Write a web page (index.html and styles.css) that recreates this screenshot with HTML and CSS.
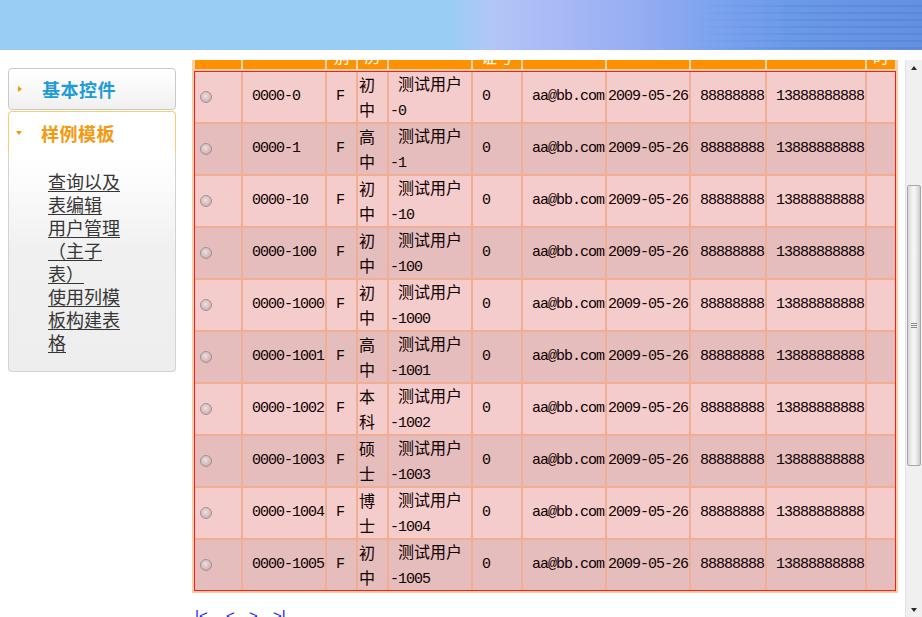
FILE: index.html
```html
<!DOCTYPE html>
<html lang="zh-CN">
<head>
<meta charset="utf-8">
<title>样例模板</title>
<link rel="stylesheet" href="styles.css">
</head>
<body>
<div class="banner"></div>
<div class="content">
  <aside class="sidebar">
    <div class="panel panel-closed">
      <span class="tri-right"></span><span class="ptitle ptitle-blue">基本控件</span>
    </div>
    <div class="panel-open">
      <div class="phead"><span class="tri-down"></span><span class="ptitle ptitle-orange">样例模板</span></div>
      <div class="pbody">
        <a class="plink" href="#">查询以及表编辑</a>
        <a class="plink" href="#">用户管理（主子表）</a>
        <a class="plink" href="#">使用列模板构建表格</a>
      </div>
    </div>
  </aside>
  <main class="main">
    <div class="viewport">
      <div class="scroller">
        <div class="tablewrap">
          <div class="grid thead">
            <div class="h"><span>选择</span></div>
            <div class="h"><span>用户编号</span></div>
            <div class="h"><span>性<br>别</span></div>
            <div class="h"><span>学<br>历</span></div>
            <div class="h"><span>用户名</span></div>
            <div class="h"><span>身份<br>证号</span></div>
            <div class="h"><span>邮箱</span></div>
            <div class="h"><span>出生日期</span></div>
            <div class="h"><span>电话</span></div>
            <div class="h"><span>手机</span></div>
            <div class="h"><span>工<br>时</span></div>
          </div>
          <div class="grid tbody">
            <div class="row">
              <div class="c"><span class="radio"></span></div>
              <div class="c"><span>&nbsp;0000-0</span></div>
              <div class="c"><span>&nbsp;F</span></div>
              <div class="c c2"><span class="zh">初<br>中</span></div>
              <div class="c c2"><span>&nbsp;<span class="zh">测试用户</span><br>-0</span></div>
              <div class="c"><span>&nbsp;0</span></div>
              <div class="c"><span>&nbsp;aa@bb.com</span></div>
              <div class="c"><span>2009-05-26</span></div>
              <div class="c"><span>&nbsp;88888888</span></div>
              <div class="c"><span>&nbsp;13888888888</span></div>
              <div class="c"></div>
            </div>
            <div class="row">
              <div class="c"><span class="radio"></span></div>
              <div class="c"><span>&nbsp;0000-1</span></div>
              <div class="c"><span>&nbsp;F</span></div>
              <div class="c c2"><span class="zh">高<br>中</span></div>
              <div class="c c2"><span>&nbsp;<span class="zh">测试用户</span><br>-1</span></div>
              <div class="c"><span>&nbsp;0</span></div>
              <div class="c"><span>&nbsp;aa@bb.com</span></div>
              <div class="c"><span>2009-05-26</span></div>
              <div class="c"><span>&nbsp;88888888</span></div>
              <div class="c"><span>&nbsp;13888888888</span></div>
              <div class="c"></div>
            </div>
            <div class="row">
              <div class="c"><span class="radio"></span></div>
              <div class="c"><span>&nbsp;0000-10</span></div>
              <div class="c"><span>&nbsp;F</span></div>
              <div class="c c2"><span class="zh">初<br>中</span></div>
              <div class="c c2"><span>&nbsp;<span class="zh">测试用户</span><br>-10</span></div>
              <div class="c"><span>&nbsp;0</span></div>
              <div class="c"><span>&nbsp;aa@bb.com</span></div>
              <div class="c"><span>2009-05-26</span></div>
              <div class="c"><span>&nbsp;88888888</span></div>
              <div class="c"><span>&nbsp;13888888888</span></div>
              <div class="c"></div>
            </div>
            <div class="row">
              <div class="c"><span class="radio"></span></div>
              <div class="c"><span>&nbsp;0000-100</span></div>
              <div class="c"><span>&nbsp;F</span></div>
              <div class="c c2"><span class="zh">初<br>中</span></div>
              <div class="c c2"><span>&nbsp;<span class="zh">测试用户</span><br>-100</span></div>
              <div class="c"><span>&nbsp;0</span></div>
              <div class="c"><span>&nbsp;aa@bb.com</span></div>
              <div class="c"><span>2009-05-26</span></div>
              <div class="c"><span>&nbsp;88888888</span></div>
              <div class="c"><span>&nbsp;13888888888</span></div>
              <div class="c"></div>
            </div>
            <div class="row">
              <div class="c"><span class="radio"></span></div>
              <div class="c"><span>&nbsp;0000-1000</span></div>
              <div class="c"><span>&nbsp;F</span></div>
              <div class="c c2"><span class="zh">初<br>中</span></div>
              <div class="c c2"><span>&nbsp;<span class="zh">测试用户</span><br>-1000</span></div>
              <div class="c"><span>&nbsp;0</span></div>
              <div class="c"><span>&nbsp;aa@bb.com</span></div>
              <div class="c"><span>2009-05-26</span></div>
              <div class="c"><span>&nbsp;88888888</span></div>
              <div class="c"><span>&nbsp;13888888888</span></div>
              <div class="c"></div>
            </div>
            <div class="row">
              <div class="c"><span class="radio"></span></div>
              <div class="c"><span>&nbsp;0000-1001</span></div>
              <div class="c"><span>&nbsp;F</span></div>
              <div class="c c2"><span class="zh">高<br>中</span></div>
              <div class="c c2"><span>&nbsp;<span class="zh">测试用户</span><br>-1001</span></div>
              <div class="c"><span>&nbsp;0</span></div>
              <div class="c"><span>&nbsp;aa@bb.com</span></div>
              <div class="c"><span>2009-05-26</span></div>
              <div class="c"><span>&nbsp;88888888</span></div>
              <div class="c"><span>&nbsp;13888888888</span></div>
              <div class="c"></div>
            </div>
            <div class="row">
              <div class="c"><span class="radio"></span></div>
              <div class="c"><span>&nbsp;0000-1002</span></div>
              <div class="c"><span>&nbsp;F</span></div>
              <div class="c c2"><span class="zh">本<br>科</span></div>
              <div class="c c2"><span>&nbsp;<span class="zh">测试用户</span><br>-1002</span></div>
              <div class="c"><span>&nbsp;0</span></div>
              <div class="c"><span>&nbsp;aa@bb.com</span></div>
              <div class="c"><span>2009-05-26</span></div>
              <div class="c"><span>&nbsp;88888888</span></div>
              <div class="c"><span>&nbsp;13888888888</span></div>
              <div class="c"></div>
            </div>
            <div class="row">
              <div class="c"><span class="radio"></span></div>
              <div class="c"><span>&nbsp;0000-1003</span></div>
              <div class="c"><span>&nbsp;F</span></div>
              <div class="c c2"><span class="zh">硕<br>士</span></div>
              <div class="c c2"><span>&nbsp;<span class="zh">测试用户</span><br>-1003</span></div>
              <div class="c"><span>&nbsp;0</span></div>
              <div class="c"><span>&nbsp;aa@bb.com</span></div>
              <div class="c"><span>2009-05-26</span></div>
              <div class="c"><span>&nbsp;88888888</span></div>
              <div class="c"><span>&nbsp;13888888888</span></div>
              <div class="c"></div>
            </div>
            <div class="row">
              <div class="c"><span class="radio"></span></div>
              <div class="c"><span>&nbsp;0000-1004</span></div>
              <div class="c"><span>&nbsp;F</span></div>
              <div class="c c2"><span class="zh">博<br>士</span></div>
              <div class="c c2"><span>&nbsp;<span class="zh">测试用户</span><br>-1004</span></div>
              <div class="c"><span>&nbsp;0</span></div>
              <div class="c"><span>&nbsp;aa@bb.com</span></div>
              <div class="c"><span>2009-05-26</span></div>
              <div class="c"><span>&nbsp;88888888</span></div>
              <div class="c"><span>&nbsp;13888888888</span></div>
              <div class="c"></div>
            </div>
            <div class="row">
              <div class="c"><span class="radio"></span></div>
              <div class="c"><span>&nbsp;0000-1005</span></div>
              <div class="c"><span>&nbsp;F</span></div>
              <div class="c c2"><span class="zh">初<br>中</span></div>
              <div class="c c2"><span>&nbsp;<span class="zh">测试用户</span><br>-1005</span></div>
              <div class="c"><span>&nbsp;0</span></div>
              <div class="c"><span>&nbsp;aa@bb.com</span></div>
              <div class="c"><span>2009-05-26</span></div>
              <div class="c"><span>&nbsp;88888888</span></div>
              <div class="c"><span>&nbsp;13888888888</span></div>
              <div class="c"></div>
            </div>
          </div>
        </div>
        <div class="pager">
          <a class="pg pg-first" href="#">|&lt;</a>
          <a class="pg pg-prev" href="#">&lt;</a>
          <a class="pg pg-next" href="#">&gt;</a>
          <a class="pg" href="#">&gt;|</a>
        </div>
      </div>
    </div>
    <div class="vscroll">
      <div class="sb-btn"><span class="arrow-up"></span></div>
      <div class="sb-track">
        <div class="sb-thumb"><span class="grip"></span></div>
      </div>
      <div class="sb-btn"><span class="arrow-down"></span></div>
    </div>
  </main>
</div>
</body>
</html>
```
FILE: styles.css
```css
html, body {
  margin: 0;
  padding: 0;
  background: #ffffff;
  overflow: hidden;
}
body {
  font-family: "Noto Sans CJK SC", sans-serif;
  width: 922px;
  height: 617px;
}

/* ---------- banner ---------- */
.banner {
  height: 50px;
  position: relative;
  overflow: hidden;
  background: linear-gradient(90deg,
    #9acdf3 0,
    #9acdf3 452px,
    #b2c6f7 492px,
    #a8b9f5 560px,
    #95adf2 640px,
    #7ca3ee 715px,
    #6b9ae9 790px,
    #6490e1 922px);
}
.banner::after {
  content: "";
  position: absolute;
  top: 0;
  right: 0;
  width: 230px;
  height: 100%;
  background: repeating-linear-gradient(180deg,
    rgba(70, 110, 200, 0) 0 5px,
    rgba(55, 95, 185, 0.18) 5px 7px);
  -webkit-mask-image: linear-gradient(90deg, transparent 0, #000 60%);
  mask-image: linear-gradient(90deg, transparent 0, #000 60%);
}

/* ---------- layout ---------- */
.content {
  display: flex;
  align-items: flex-start;
}
.sidebar {
  width: 168px;
  margin-left: 8px;
  margin-top: 18px;
  display: flex;
  flex-direction: column;
  gap: 1px;
}
.main {
  flex: 1;
  margin-left: 14px;
  margin-top: 10px;
  height: 557px;
  display: flex;
}

/* ---------- sidebar ---------- */
.panel-closed {
  box-sizing: border-box;
  height: 42px;
  border: 1px solid #c9c9c9;
  border-radius: 4px;
  background: linear-gradient(180deg, #ffffff 0, #f7f7f7 60%, #efefef 100%);
  display: flex;
  align-items: center;
  padding-left: 9px;
}
.tri-right {
  width: 0;
  height: 0;
  border-left: 4px solid #f39800;
  border-top: 3.5px solid transparent;
  border-bottom: 3.5px solid transparent;
  margin-right: 20px;
}
.ptitle {
  font-size: 18px;
  font-weight: 700;
  line-height: 24px;
  letter-spacing: 0.5px;
}
.ptitle-blue { color: #1d9bd6; }
.ptitle-orange { color: #f39a10; }

.panel-open {
  display: flex;
  flex-direction: column;
}
.phead {
  box-sizing: border-box;
  height: 42px;
  border: 1px solid #f6cf6e;
  border-bottom: none;
  border-radius: 4px 4px 0 0;
  background: #ffffff;
  display: flex;
  align-items: center;
  padding-left: 7px;
}
.tri-down {
  width: 0;
  height: 0;
  border-top: 4px solid #f39800;
  border-left: 3.5px solid transparent;
  border-right: 3.5px solid transparent;
  margin-right: 19px;
  margin-top: 1px;
}
.pbody {
  box-sizing: border-box;
  height: 219px;
  border: 1px solid #d3d3d3;
  border-top: none;
  border-radius: 0 0 4px 4px;
  background: linear-gradient(180deg, #ffffff 0, #fbfbfb 15%, #f0f0f0 45%, #eeeeee 100%);
  padding: 17px 0 0 39px;
}
.plink {
  display: block;
  width: 74px;
  font-size: 18px;
  line-height: 23px;
  color: #363636;
  text-decoration: underline;
  text-underline-offset: 2px;
}

/* ---------- main viewport ---------- */
.viewport {
  flex: 1;
  overflow: hidden;
}
.scroller {
  margin-top: -44px;
  padding-left: 2px;
}
.tablewrap {
  width: fit-content;
  background: #f7ceaa;
  padding: 2px 2px;
  display: flex;
  flex-direction: column;
  gap: 1px;
}
.grid {
  display: grid;
  grid-template-columns: 46px 82px 29px 29px 82px 48px 82px 82px 74px 98px 28px;
  gap: 2px;
}
.thead {
  border: 1px solid #f9d6ad;
  background: #f9d6ad;
  grid-auto-rows: 50px;
}
.h {
  background: #ff9100;
  color: #ffffff;
  font-size: 16px;
  line-height: 24px;
  display: flex;
  align-items: center;
  justify-content: center;
  text-align: center;
  overflow: hidden;
}
.tbody {
  border: 1px solid #ff1a1a;
  background: #f2ae93;
  grid-auto-rows: 50px;
}
.row { display: contents; }
.c {
  background: #f4cccc;
  display: flex;
  align-items: center;
  padding: 0 1px;
  white-space: nowrap;
  font-family: "Liberation Mono", monospace;
  font-size: 15px;
  line-height: 20px;
  letter-spacing: -1px;
  color: #100000;
}
.row:nth-child(even) > .c { background: #e5bdbd; }
.c2 { line-height: 25px; }
.zh {
  font-family: "Noto Sans CJK SC", sans-serif;
  font-size: 16px;
  letter-spacing: 0;
}
.radio {
  display: block;
  box-sizing: border-box;
  width: 12px;
  height: 12px;
  margin-left: 4px;
  margin-top: -1px;
  border-radius: 50%;
  border: 1px solid #a88e92;
  background: radial-gradient(circle at 45% 40%, #efe0e0 0, #d5bcbf 55%, #b99ea2 100%);
}

/* ---------- pager ---------- */
.pager {
  display: flex;
  margin-top: 15px;
  padding-left: 3px;
  font-family: "Liberation Sans", sans-serif;
  font-size: 15px;
  line-height: 16px;
}
.pg {
  color: #1414ff;
  text-decoration: none;
}
.pg-first { width: 31px; }
.pg-prev { width: 23px; }
.pg-next { width: 24px; }

/* ---------- fake scrollbar ---------- */
.vscroll {
  width: 17px;
  box-sizing: border-box;
  border-left: 1px solid #e3e3e3;
  background: #f0f0f0;
  display: flex;
  flex-direction: column;
}
.sb-btn {
  height: 17px;
  display: flex;
  align-items: center;
  justify-content: center;
}
.arrow-up {
  width: 0;
  height: 0;
  border-bottom: 4px solid #2a2a2a;
  border-left: 3.5px solid transparent;
  border-right: 3.5px solid transparent;
  margin-top: -2px;
}
.arrow-down {
  width: 0;
  height: 0;
  border-top: 4px solid #2a2a2a;
  border-left: 3.5px solid transparent;
  border-right: 3.5px solid transparent;
  margin-top: 2px;
}
.sb-track {
  flex: 1;
}
.sb-thumb {
  box-sizing: border-box;
  margin-top: 108px;
  margin-left: 1px;
  width: 14px;
  height: 281px;
  border: 1px solid #a8a8a8;
  border-radius: 2px;
  background: linear-gradient(90deg, #d6d6d6 0, #f3f3f3 35%, #f6f6f6 55%, #dedede 85%, #cacaca 100%);
  display: flex;
  align-items: center;
  justify-content: center;
}
.grip {
  display: block;
  width: 6px;
  height: 5px;
  background: repeating-linear-gradient(180deg, #8a8a8a 0 1px, transparent 1px 2px);
}
```
